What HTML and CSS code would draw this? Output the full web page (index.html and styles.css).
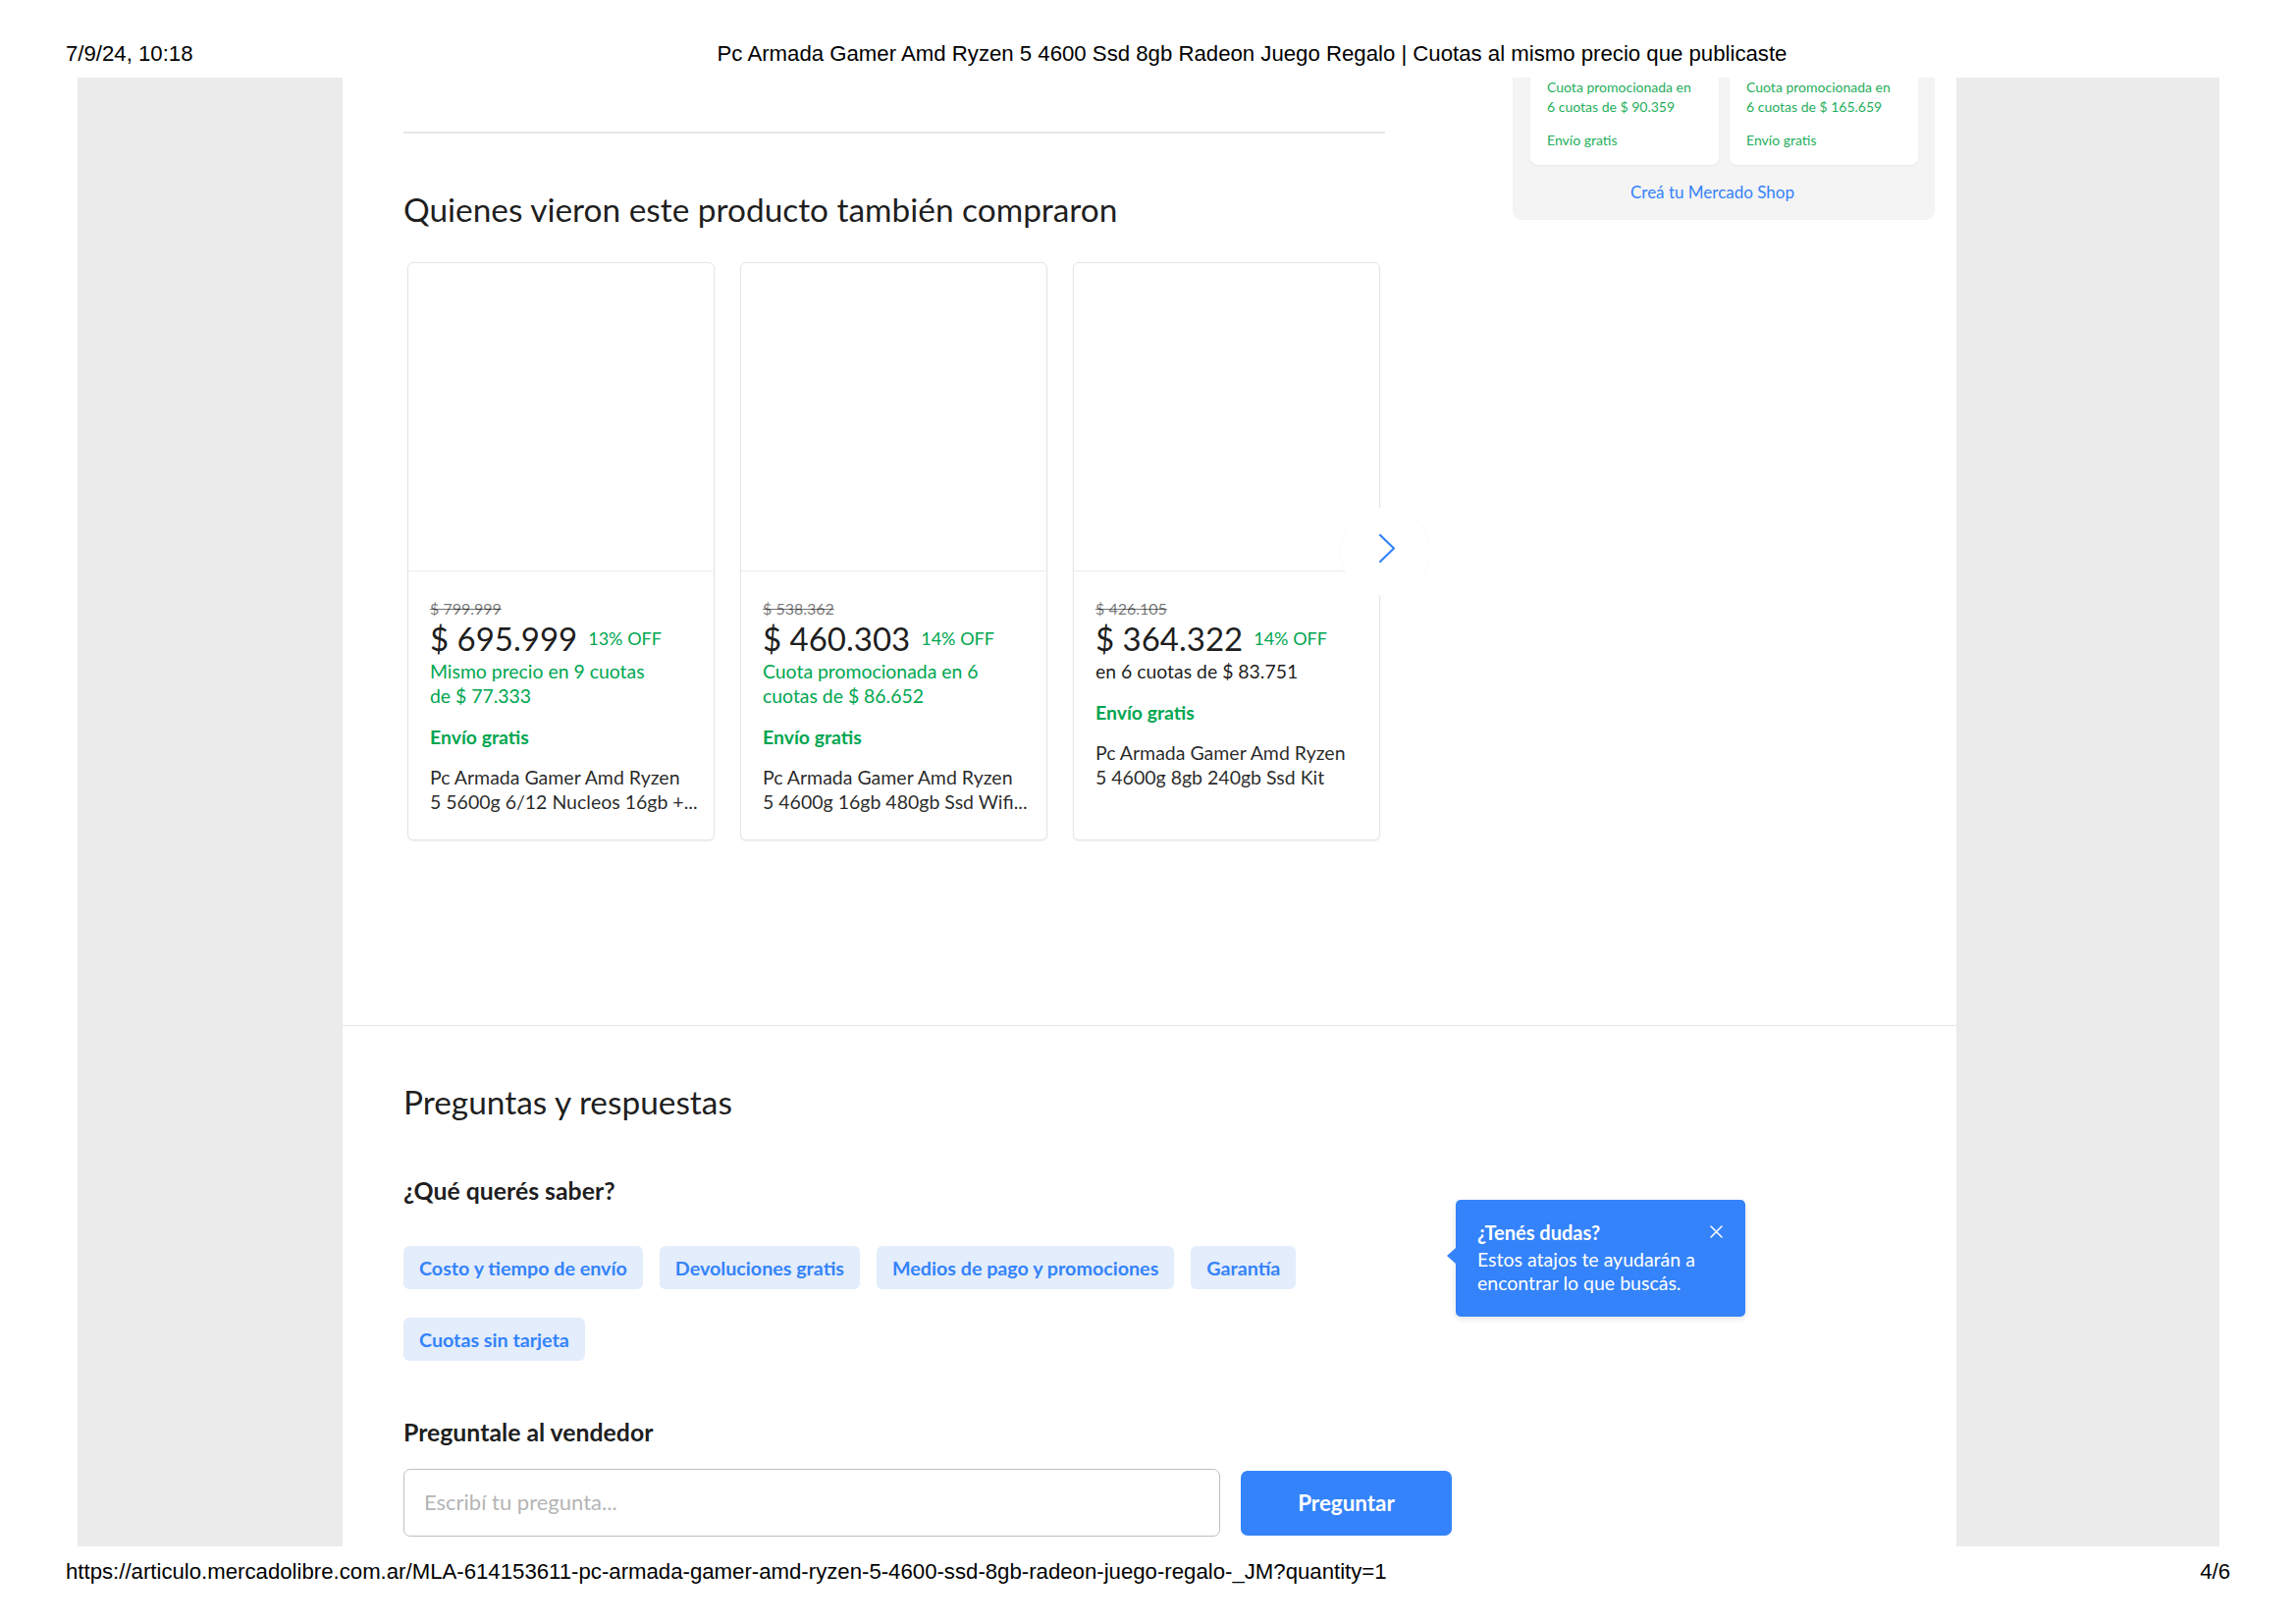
FILE: index.html
```html
<!DOCTYPE html>
<html lang="es">
<head>
<meta charset="utf-8">
<title>Pc Armada Gamer Amd Ryzen 5 4600 Ssd 8gb Radeon Juego Regalo | Cuotas al mismo precio que publicaste</title>
<link rel="stylesheet" href="styles.css">
</head>
<body>
<div class="print-header">
  <span class="print-date">7/9/24, 10:18</span>
  <span class="print-title">Pc Armada Gamer Amd Ryzen 5 4600 Ssd 8gb Radeon Juego Regalo | Cuotas al mismo precio que publicaste</span>
</div>

<div class="frame">
  <div class="gutter gutter-left"></div>
  <div class="page">
    <div class="top">
      <div class="main-col">
        <div class="rule"></div>
        <h2 class="section-title">Quienes vieron este producto también compraron</h2>
        <div class="carousel">
          <div class="card">
            <div class="card-img"></div>
            <div class="card-body">
              <div class="old-price">$ 799.999</div>
              <div class="price-row"><span class="price">$ 695.999</span><span class="off">13% OFF</span></div>
              <div class="inst green">Mismo precio en 9 cuotas<br>de $ 77.333</div>
              <div class="ship">Envío gratis</div>
              <div class="card-title"><span class="line">Pc Armada Gamer Amd Ryzen</span><span class="line">5 5600g 6/12 Nucleos 16gb +...</span></div>
            </div>
          </div>
          <div class="card">
            <div class="card-img"></div>
            <div class="card-body">
              <div class="old-price">$ 538.362</div>
              <div class="price-row"><span class="price">$ 460.303</span><span class="off">14% OFF</span></div>
              <div class="inst green">Cuota promocionada en 6<br>cuotas de $ 86.652</div>
              <div class="ship">Envío gratis</div>
              <div class="card-title"><span class="line">Pc Armada Gamer Amd Ryzen</span><span class="line">5 4600g 16gb 480gb Ssd Wifi...</span></div>
            </div>
          </div>
          <div class="card">
            <div class="card-img"></div>
            <div class="card-body">
              <div class="old-price">$ 426.105</div>
              <div class="price-row"><span class="price">$ 364.322</span><span class="off">14% OFF</span></div>
              <div class="inst">en 6 cuotas de $ 83.751</div>
              <div class="ship">Envío gratis</div>
              <div class="card-title"><span class="line">Pc Armada Gamer Amd Ryzen</span><span class="line">5 4600g 8gb 240gb Ssd Kit</span></div>
            </div>
          </div>
          <div class="next">
            <svg width="90" height="90" viewBox="0 0 90 90"><polyline points="40,28 54,41.5 40,55" fill="none" stroke="#3483fa" stroke-width="2.2" stroke-linecap="round" stroke-linejoin="round"/></svg>
          </div>
        </div>
      </div>
      <aside class="side">
        <div class="shop-box">
          <div class="shop-cards">
            <div class="shop-card">
              <div class="shop-line">Cuota promocionada en</div>
              <div class="shop-line">6 cuotas de $ 90.359</div>
              <div class="shop-ship">Envío gratis</div>
            </div>
            <div class="shop-card">
              <div class="shop-line">Cuota promocionada en</div>
              <div class="shop-line">6 cuotas de $ 165.659</div>
              <div class="shop-ship">Envío gratis</div>
            </div>
          </div>
          <div class="shop-link">Creá tu Mercado Shop</div>
        </div>
      </aside>
    </div>

    <section class="qa">
      <h2 class="section-title">Preguntas y respuestas</h2>
      <h3 class="qa-sub">¿Qué querés saber?</h3>
      <div class="chips">
        <span class="chip">Costo y tiempo de envío</span>
        <span class="chip">Devoluciones gratis</span>
        <span class="chip">Medios de pago y promociones</span>
        <span class="chip">Garantía</span>
        <span class="chip">Cuotas sin tarjeta</span>
      </div>
      <h3 class="qa-sub qa-sub-ask">Preguntale al vendedor</h3>
      <div class="ask">
        <div class="ask-input">Escribí tu pregunta...</div>
        <div class="ask-btn">Preguntar</div>
      </div>
      <div class="tip">
        <div class="tip-title">¿Tenés dudas?</div>
        <div class="tip-text">Estos atajos te ayudarán a<br>encontrar lo que buscás.</div>
        <svg class="tip-close" width="13" height="13" viewBox="0 0 13 13"><path d="M1 1L12 12M12 1L1 12" stroke="#fff" stroke-width="1.5" stroke-linecap="round"/></svg>
      </div>
    </section>
  </div>
  <div class="gutter gutter-right"></div>
</div>

<div class="print-footer">
  <span>https://articulo.mercadolibre.com.ar/MLA-614153611-pc-armada-gamer-amd-ryzen-5-4600-ssd-8gb-radeon-juego-regalo-_JM?quantity=1</span>
  <span>4/6</span>
</div>
</body>
</html>
```

FILE: styles.css
```css
html, body {
  margin: 0;
  padding: 0;
  background: #fff;
}

body {
  width: 2339px;
  height: 1653px;
  overflow: hidden;
}

.print-header {
  height: 79px;
  box-sizing: border-box;
  padding: 42px 0 0 67px;
  display: flex;
  font-family: "Liberation Sans", Arial, sans-serif;
  font-size: 22.2px;
  line-height: 25px;
  color: #000;
  white-space: nowrap;
}

.print-title {
  margin-left: 534px;
}

.frame {
  margin-left: 79px;
  width: 2182px;
  height: 1496px;
  display: flex;
  background: #ebebeb;
  overflow: hidden;
}

.gutter-left {
  width: 270px;
  flex: none;
}

.gutter-right {
  flex: 1;
}

.page {
  width: 1644px;
  flex: none;
  background: #fff;
  font-family: Lato, "Open Sans", sans-serif;
  color: rgba(0, 0, 0, .9);
}

.top {
  height: 966px;
  box-sizing: border-box;
  border-bottom: 1px solid #e6e6e6;
  display: flex;
}

.main-col {
  margin-left: 62px;
  width: 1000px;
  flex: none;
}

.rule {
  margin-top: 55px;
  border-top: 2px solid #e6e6e6;
}

.section-title {
  margin: 57px 0 0;
  font-size: 33.4px;
  line-height: 40px;
  font-weight: 400;
}

.carousel {
  position: relative;
  margin-top: 34px;
  padding-left: 4px;
  display: flex;
  gap: 26px;
}

.card {
  width: 313px;
  height: 589px;
  box-sizing: border-box;
  border: 1px solid #e5e5e5;
  border-radius: 6px;
  box-shadow: 0 1px 2px rgba(0, 0, 0, .06);
  background: #fff;
}

.card-img {
  height: 313px;
  border-bottom: 1px solid #ececec;
}

.card-body {
  padding: 28px 20px 0 22px;
}

.old-price {
  font-size: 16px;
  line-height: 20px;
  color: rgba(0, 0, 0, .55);
  text-decoration: line-through;
}

.price-row {
  margin-top: 2px;
  height: 36px;
  display: flex;
  align-items: center;
  gap: 11px;
}

.price {
  font-size: 33px;
  line-height: 36px;
  color: rgba(0, 0, 0, .9);
}

.off {
  font-size: 18px;
  color: #00a650;
}

.inst {
  margin-top: 3px;
  font-size: 19.4px;
  line-height: 25px;
  color: rgba(0, 0, 0, .9);
}

.inst.green {
  color: #00a650;
}

.ship {
  margin-top: 17px;
  font-size: 19.4px;
  line-height: 25px;
  font-weight: 700;
  color: #00a650;
}

.card-title {
  margin-top: 16px;
  font-size: 19.5px;
  line-height: 25px;
  color: rgba(0, 0, 0, .85);
}

.line {
  display: block;
  white-space: nowrap;
}

.next {
  position: absolute;
  left: 955px;
  top: 250px;
  width: 90px;
  height: 90px;
  border-radius: 50%;
  background: #fff;
  box-shadow: 0 0 3px rgba(0, 0, 0, .035);
}

.next svg {
  display: block;
}

.side {
  margin-left: 130px;
  width: 430px;
  flex: none;
}

.shop-box {
  background: #f4f4f4;
  border-radius: 0 0 9px 9px;
  padding: 0 17px 18px 18px;
}

.shop-cards {
  display: flex;
  gap: 11px;
}

.shop-card {
  flex: 1;
  background: #fff;
  border-radius: 0 0 8px 8px;
  box-shadow: 0 1px 2px rgba(0, 0, 0, .05);
  padding: 0 17px 15px;
  font-size: 14px;
  line-height: 20px;
  color: #1fae5c;
}

.shop-ship {
  margin-top: 14px;
}

.shop-link {
  margin-top: 18px;
  padding-right: 24px;
  text-align: center;
  font-size: 17px;
  line-height: 20px;
  color: #3483fa;
}

.qa {
  position: relative;
  padding: 57px 0 0 62px;
}

.qa .section-title {
  margin-top: 0;
}

.qa-sub {
  margin: 57px 0 0;
  font-size: 24.8px;
  line-height: 28px;
  font-weight: 700;
}

.qa-sub-ask {
  margin-top: 59px;
}

.chips {
  margin-top: 42px;
  width: 1000px;
  display: flex;
  flex-wrap: wrap;
  gap: 29px 17px;
}

.chip {
  height: 44px;
  padding: 0 16px;
  display: flex;
  align-items: center;
  border-radius: 6px;
  background: #e3edfb;
  color: #3483fa;
  font-size: 19.7px;
  font-weight: 700;
}

.ask {
  margin-top: 23px;
  display: flex;
  align-items: center;
  gap: 21px;
}

.ask-input {
  width: 832px;
  height: 69px;
  box-sizing: border-box;
  border: 1px solid #bfbfbf;
  border-radius: 7px;
  padding: 0 0 3px 20px;
  display: flex;
  align-items: center;
  font-size: 22px;
  color: #b5b5b5;
}

.ask-btn {
  width: 215px;
  height: 66px;
  border-radius: 7px;
  background: #3483fa;
  color: #fff;
  display: flex;
  align-items: center;
  justify-content: center;
  font-size: 22.4px;
  font-weight: 700;
}

.tip {
  position: absolute;
  left: 1134px;
  top: 177px;
  width: 295px;
  height: 119px;
  box-sizing: border-box;
  padding: 21px 22px;
  background: #3483fa;
  border-radius: 5px;
  box-shadow: 0 2px 6px rgba(0, 0, 0, .12);
  color: #fff;
}

.tip::before {
  content: "";
  position: absolute;
  left: -9px;
  top: 49px;
  border-style: solid;
  border-width: 8px 9px 8px 0;
  border-color: transparent #3483fa transparent transparent;
}

.tip-title {
  font-size: 20px;
  line-height: 24px;
  font-weight: 700;
}

.tip-text {
  margin-top: 4px;
  font-size: 19.5px;
  line-height: 24px;
}

.tip-close {
  position: absolute;
  right: 23px;
  top: 26px;
}

.print-footer {
  height: 78px;
  box-sizing: border-box;
  padding: 13px 67px 0;
  display: flex;
  justify-content: space-between;
  font-family: "Liberation Sans", Arial, sans-serif;
  font-size: 22.2px;
  line-height: 25px;
  color: #000;
  white-space: nowrap;
}
```
